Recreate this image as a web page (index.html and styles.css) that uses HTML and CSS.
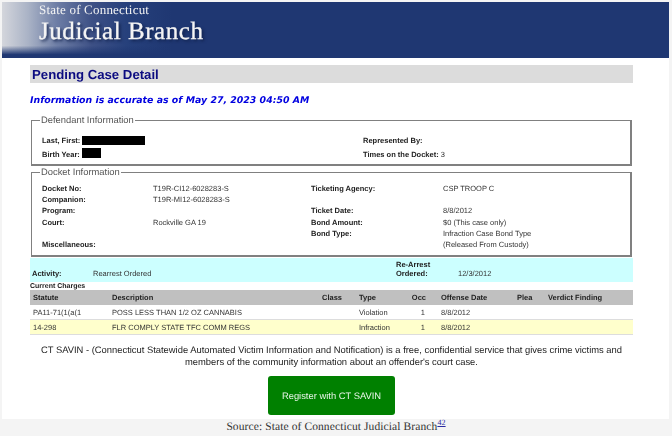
FILE: index.html
```html
<!DOCTYPE html>
<html lang="en">
<head>
<meta charset="utf-8">
<title>Pending Case Detail</title>
<link rel="stylesheet" href="styles.css">
</head>
<body>
<div class="shot">
  <header class="banner">
    <div class="logo">
      <div class="logo-state">State of Connecticut</div>
      <div class="logo-name">Judicial Branch</div>
    </div>
  </header>
  <main class="content">
    <h1 class="title">Pending Case Detail</h1>
    <p class="accuracy">Information is accurate as of May 27, 2023 04:50 AM</p>

    <fieldset class="box box-def">
      <legend>Defendant Information</legend>
      <div class="def-grid">
        <div class="def-cell"><b class="def-label">Last, First:</b><span class="redact redact-name"></span></div>
        <div class="def-cell"><b>Represented By:</b></div>
        <div class="def-cell"><b class="def-label">Birth Year:</b><span class="redact redact-year"></span></div>
        <div class="def-cell"><b>Times on the Docket:</b><span class="def-count">3</span></div>
      </div>
    </fieldset>

    <fieldset class="box box-docket">
      <legend>Docket Information</legend>
      <div class="docket-grid">
        <b>Docket No:</b><span>T19R-CI12-6028283-S</span><b>Ticketing Agency:</b><span>CSP TROOP C</span>
        <b>Companion:</b><span>T19R-MI12-6028283-S</span><b></b><span></span>
        <b>Program:</b><span></span><b>Ticket Date:</b><span>8/8/2012</span>
        <b>Court:</b><span>Rockville GA 19</span><b>Bond Amount:</b><span>$0 (This case only)</span>
        <b></b><span></span><b>Bond Type:</b><span>Infraction Case Bond Type</span>
        <b>Miscellaneous:</b><span></span><b></b><span>(Released From Custody)</span>
      </div>
    </fieldset>

    <div class="activity">
      <b>Activity:</b><span>Rearrest Ordered</span>
      <b class="rearrest">Re-Arrest<br>Ordered:</b><span>12/3/2012</span>
    </div>

    <div class="charges-title">Current Charges</div>
    <table class="charges">
      <colgroup>
        <col class="c-statute"><col class="c-desc"><col class="c-class"><col class="c-type"><col class="c-occ"><col class="c-date"><col class="c-plea"><col class="c-verdict">
      </colgroup>
      <thead>
        <tr><th>Statute</th><th>Description</th><th>Class</th><th>Type</th><th class="occ">Occ</th><th>Offense Date</th><th>Plea</th><th>Verdict Finding</th></tr>
      </thead>
      <tbody>
        <tr><td>PA11-71(1(a(1</td><td>POSS LESS THAN 1/2 OZ CANNABIS</td><td></td><td>Violation</td><td class="occ">1</td><td>8/8/2012</td><td></td><td></td></tr>
        <tr class="alt"><td>14-298</td><td>FLR COMPLY STATE TFC COMM REGS</td><td></td><td>Infraction</td><td class="occ">1</td><td>8/8/2012</td><td></td><td></td></tr>
      </tbody>
    </table>

    <p class="savin">CT SAVIN - (Connecticut Statewide Automated Victim Information and Notification) is a free, confidential service that gives crime victims and members of the community information about an offender's court case.</p>
    <div class="register-row"><a class="register" href="#">Register with CT SAVIN</a></div>
  </main>
  <figcaption class="source">Source: State of Connecticut Judicial Branch<sup>42</sup></figcaption>
</div>
</body>
</html>
```
FILE: styles.css
```css
html, body {
  margin: 0;
  padding: 0;
  width: 672px;
  height: 436px;
  overflow: hidden;
  background: #f4f4f4;
}

.shot {
  display: flex;
  flex-direction: column;
  padding-top: 2px;
  font-family: "Liberation Sans", Arial, sans-serif;
  color: #333;
  text-rendering: geometricPrecision;
}

.banner {
  height: 56px;
  margin-left: 2px;
  width: 667px;
  background:
    linear-gradient(180deg, rgba(31, 55, 114, 0) 78%, #1f3772 94%),
    linear-gradient(90deg, #d4d6dc 0, #aab3c6 26px, #6d7da5 55px, #3d5085 90px, #26407b 125px, #1f3772 170px, #1f3772 100%);
  filter: blur(0.3px);
}

.logo {
  display: flex;
  flex-direction: column;
  padding: 0 0 0 37px;
  font-family: "Liberation Serif", "Times New Roman", serif;
  color: #f4f4f4;
}

.logo-state {
  font-size: 13px;
  line-height: 15px;
  letter-spacing: 0.2px;
}

.logo-name {
  font-size: 25px;
  line-height: 29px;
  letter-spacing: 0.55px;
  -webkit-text-stroke: 0.3px #f4f4f4;
  text-shadow: 2px 2px 3px #10204a;
}

.content {
  height: 361px;
  margin-left: 2px;
  padding: 7px 36px 0 28px;
  box-sizing: border-box;
  width: 667px;
  background: #fff;
  filter: blur(0.3px);
  display: flex;
  flex-direction: column;
}

.title {
  margin: 0;
  height: 18px;
  padding-left: 2px;
  background: #dcdcdc;
  color: #0b0b80;
  font-size: 13.2px;
  line-height: 19px;
  font-weight: bold;
}

.accuracy {
  margin: 12px 0 -1px;
  color: #0000e0;
  font-family: "DejaVu Sans", Verdana, sans-serif;
  font-size: 9.4px;
  font-style: italic;
  font-weight: bold;
  line-height: 12px;
}

.box {
  margin: 0 1px;
  padding: 0 0 0 10px;
  border: 1px solid #808080;
  border-right-width: 2px;
  border-bottom-width: 2px;
  min-width: 0;
  box-sizing: border-box;
  font-size: 7.5px;
  color: #333;
}

.box legend {
  padding: 0 1px;
  margin-left: -2px;
  font-size: 9.4px;
  line-height: 12px;
  color: #555;
}

.box b, .activity b, .charges th, .charges-title {
  color: #222;
  font-weight: bold;
}

.box-def {
  margin-top: 8px;
  height: 52px;
}

.def-grid {
  display: grid;
  grid-template-columns: 321px 1fr;
  grid-auto-rows: 14px;
  padding-top: 8px;
  line-height: 14px;
}

.def-cell {
  display: flex;
  align-items: center;
  gap: 3px;
}

.def-label {
  width: 40px;
  margin-right: -3px;
}

.def-count {
  margin-left: -1px;
}

.redact {
  display: block;
  background: #000;
}

.redact-name { width: 63px; height: 9px; margin-top: -1px; }
.redact-year { width: 19px; height: 10px; margin-top: -4px; }

.box-docket {
  margin-top: 0;
  height: 91px;
}

.docket-grid {
  display: grid;
  grid-template-columns: 111px 158px 132px 1fr;
  grid-auto-rows: 11.2px;
  padding-top: 5px;
  line-height: 11.2px;
}

.activity {
  display: grid;
  grid-template-columns: 61px 303px 62px 1fr;
  align-items: end;
  height: 24px;
  margin-top: 1px;
  padding-left: 2px;
  padding-bottom: 4px;
  box-sizing: border-box;
  background: #ccffff;
  font-size: 7.5px;
  line-height: 8.5px;
}

.activity .rearrest {
  grid-column: 3;
}

.charges-title {
  margin-top: 1px;
  height: 7px;
  font-size: 7px;
  line-height: 8px;
}

.charges {
  width: 603px;
  margin-top: 0;
  border-collapse: collapse;
  table-layout: fixed;
  font-size: 7.5px;
}

.c-statute { width: 79px; }
.c-desc { width: 210px; }
.c-class { width: 37px; }
.c-type { width: 50px; }
.c-occ { width: 32px; }
.c-date { width: 76px; }
.c-plea { width: 31px; }
.c-verdict { width: auto; }

.charges th, .charges td {
  padding: 0 0 0 3px;
  text-align: left;
  white-space: nowrap;
}

.charges th {
  height: 15px;
  background: #c0c0c0;
}

.charges td {
  height: 14px;
  border-bottom: 1px solid #ddd;
  color: #333;
}

.charges .occ {
  text-align: right;
}

.charges th.occ { padding-right: 12px; }
.charges td.occ { padding-right: 13px; }

.charges .alt td {
  background: #ffffcc;
}

.savin {
  margin: 9px 0 0;
  padding: 0 8px;
  color: #222;
  font-size: 9.4px;
  line-height: 11.5px;
  text-align: center;
}

.register-row {
  display: flex;
  justify-content: center;
  margin-top: 9px;
}

.register {
  display: flex;
  align-items: center;
  justify-content: center;
  width: 127px;
  height: 39px;
  border-radius: 3px;
  background: #008000;
  color: #e8f4e8;
  font-size: 9.4px;
  text-decoration: none;
}

.source {
  height: 17px;
  color: #333;
  font-family: "Liberation Serif", "Times New Roman", serif;
  font-size: 11.5px;
  line-height: 16px;
  letter-spacing: 0.1px;
  text-align: center;
}

.source sup {
  color: #2a2aa0;
  font-size: 8px;
  line-height: 0;
  text-decoration: underline;
}
```
